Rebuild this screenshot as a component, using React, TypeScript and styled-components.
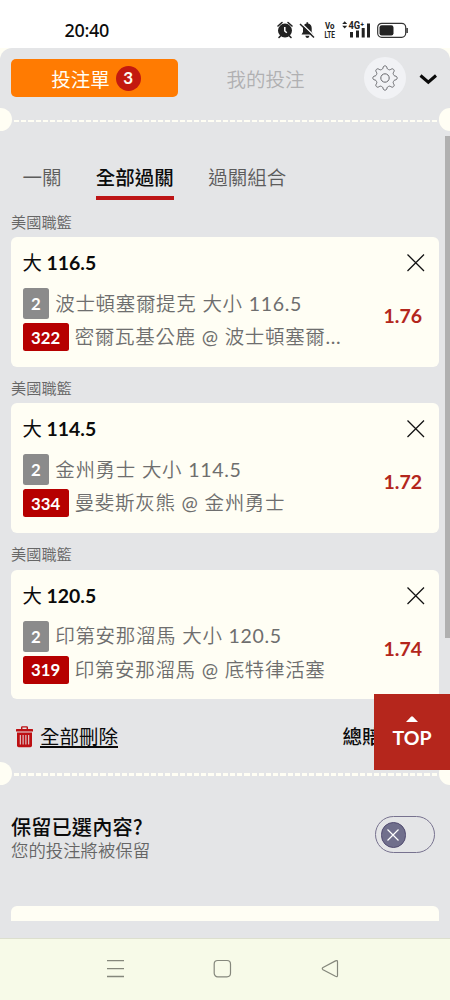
import React from 'react';
import styled, { createGlobalStyle } from 'styled-components';

const cream = '#fffef4';
const sheet = '#e4e5e7';

const GlobalStyle = createGlobalStyle`
  * { box-sizing: border-box; }
  body { margin: 0; background: #fff; }
  button { font: inherit; border: 0; padding: 0; background: none; color: inherit; letter-spacing: inherit; }
`;

const Phone = styled.div`
  position: relative;
  width: 450px;
  height: 1000px;
  overflow: hidden;
  display: flex;
  flex-direction: column;
  font-family: Lato, 'Noto Sans CJK TC', sans-serif;
  font-size: 19.5px;
  color: #0b0b0b;
  white-space: nowrap;
`;

const StatusBar = styled.header`
  height: 48px;
  flex: none;
  display: flex;
  align-items: center;
  justify-content: space-between;
  padding: 12px 40px 0 64.5px;
  font: 500 18px/22px 'Noto Sans', sans-serif;
  letter-spacing: -0.3px;
`;

const StatusIcons = styled.svg`
  display: block;
  width: 134px;
  height: 22px;
`;

const Backdrop = styled.div`
  flex: none;
  height: 890px;
  background: ${cream};
`;

const Sheet = styled.main`
  height: 890px;
  background: ${sheet};
  border-radius: 12px 12px 0 0;
  display: flex;
  flex-direction: column;
`;

const TopBar = styled.div`
  height: 60px;
  flex: none;
  display: flex;
  align-items: center;
  padding: 0 12px 0 11px;
`;

const SlipButton = styled.button`
  width: 167px;
  height: 38px;
  border-radius: 5px;
  background: #ff7b02;
  color: ${cream};
  display: flex;
  align-items: center;
  justify-content: center;
  gap: 6px;
  padding-left: 3px;
`;

const Count = styled.span`
  width: 25px;
  height: 25px;
  border-radius: 50%;
  background: #c3190f;
  font-weight: 700;
  font-size: 17px;
  line-height: 24px;
  text-align: center;
`;

const MyBets = styled.button`
  width: 175px;
  color: #b0b0b2;
  font-weight: 350;
`;

const GearButton = styled.button`
  margin-left: 11px;
  width: 42px;
  height: 42px;
  border-radius: 50%;
  background: #f1f2f5;
  display: grid;
  place-items: center;
`;

const Chevron = styled.svg`
  margin-left: auto;
`;

const Perforation = styled.div`
  height: 23px;
  flex: none;
  display: flex;
  align-items: center;
  justify-content: space-between;
  &::before, &::after {
    content: '';
    width: 11.5px;
    height: 23px;
    background: ${cream};
  }
  &::before { border-radius: 0 12px 12px 0; }
  &::after { border-radius: 12px 0 0 12px; }
`;

const Dashes = styled.div`
  flex: 1;
  height: 2.6px;
  margin-top: 2.6px;
  background: repeating-linear-gradient(90deg, transparent 0 2px, ${cream} 2px 7.2px);
`;

const Tabs = styled.nav`
  height: 78.5px;
  flex: none;
  padding: 31px 0 0 22.5px;
  display: flex;
  gap: 34.3px;
  align-items: flex-start;
`;

const Tab = styled.button<{ $active?: boolean }>`
  height: 38px;
  padding-bottom: 2px;
  line-height: 30px;
  font-weight: ${(p) => (p.$active ? 500 : 350)};
  color: ${(p) => (p.$active ? '#0b0b0b' : '#5c5c5c')};
  border-bottom: 4px solid ${(p) => (p.$active ? '#bd1516' : 'transparent')};
`;

const Bet = styled.section`
  height: 166.3px;
  flex: none;
  padding: 0 11px;
`;

const League = styled.h2`
  margin: 0;
  height: 27.5px;
  line-height: 24px;
  font-size: 15.2px;
  font-weight: 350;
  color: #666;
`;

const Card = styled.article`
  height: 129.5px;
  border-radius: 6px;
  background: ${cream};
  padding: 10px 12px 0 11.5px;
`;

const CardTop = styled.div`
  display: flex;
  justify-content: space-between;
  align-items: center;
  height: 32px;
`;

const Pick = styled.h3`
  margin: 0;
  font-size: 19.4px;
  font-weight: 700;
  line-height: 32px;
`;

const PickSide = styled.span`
  font-weight: 400;
`;

const CardBody = styled.div`
  display: flex;
  align-items: center;
  justify-content: space-between;
  padding: 9px 5px 0 0;
`;

const Lines = styled.div`
  display: flex;
  flex-direction: column;
  gap: 4px;
`;

const Line = styled.div<{ $height: number }>`
  height: ${(p) => p.$height}px;
  display: flex;
  align-items: center;
  gap: 6px;
  letter-spacing: 0.67px;
  color: #6e6e6e;
  font-weight: 350;
`;

const LineText = styled.span`
  line-height: 28px;
`;

const Digits = styled.span`
  font-weight: 400;
`;

const Tag = styled.span<{ $red?: boolean }>`
  height: 100%;
  min-width: 26.5px;
  padding: 0 8.5px;
  border-radius: 2.5px;
  background: ${(p) => (p.$red ? '#b60000' : '#8b8b8b')};
  color: #fff;
  font-size: 16.8px;
  font-weight: 700;
  letter-spacing: 0;
  display: grid;
  place-items: center;
`;

const Odds = styled.strong`
  font-weight: 700;
  line-height: 24px;
  margin-top: -7px;
  color: #b3261c;
`;

const Summary = styled.div`
  height: 53.6px;
  flex: none;
  padding: 13px 68.5px 0 16px;
  display: flex;
  align-items: flex-start;
  justify-content: space-between;
  line-height: 32px;
`;

const TotalOdds = styled.span`
  font-weight: 500;
`;

const ClearAll = styled.button`
  display: flex;
  align-items: center;
  gap: 7px;
`;

const ClearLabel = styled.span`
  text-decoration: underline;
  text-decoration-thickness: 1.5px;
  text-underline-offset: 2px;
`;

const KeepRow = styled.div`
  height: 121.3px;
  flex: none;
  display: flex;
  justify-content: space-between;
  align-items: flex-start;
  padding: 31.5px 15.5px 0 11px;
`;

const KeepTitle = styled.div`
  font-family: 'Noto Sans CJK TC', sans-serif;
  font-size: 20.2px;
  letter-spacing: 0.1px;
  font-weight: 500;
  line-height: 24px;
  margin-top: -1px;
`;

const KeepNote = styled.div`
  font-size: 17.4px;
  line-height: 24px;
  font-weight: 350;
  color: #666;
`;

const Toggle = styled.button`
  width: 59.5px;
  height: 37px;
  border: 1.3px solid #77728f;
  border-radius: 19px;
  padding-left: 4.5px;
  display: flex;
  align-items: center;
`;

const Knob = styled.span`
  width: 25.5px;
  height: 25.5px;
  border-radius: 50%;
  background: #706f8c;
  border: 1.3px solid #514b70;
  display: grid;
  place-items: center;
`;

const NextPanel = styled.div`
  height: 15px;
  flex: none;
  margin: 0 11px;
  border-radius: 6px 6px 0 0;
  background: ${cream};
`;

const NavBar = styled.footer`
  height: 62px;
  flex: none;
  background: #f7fae8;
  border-top: 1px solid #dcdfce;
  display: flex;
  justify-content: center;
  gap: 88.5px;
  padding: 20px 5px 0 0;
`;

const TopButton = styled.button`
  position: absolute;
  left: 374px;
  top: 694px;
  width: 76px;
  height: 76px;
  background: #b5261c;
  color: #fff;
  font-weight: 700;
  font-size: 19.5px;
  line-height: 24px;
  display: flex;
  flex-direction: column;
  align-items: center;
  padding-top: 21.5px;
  gap: 4.5px;
`;

const ScrollThumb = styled.div`
  position: absolute;
  left: 445px;
  top: 136px;
  width: 5px;
  height: 502px;
  background: #b0b0b0;
`;

const gearPath = (() => {
  const points: string[] = [];
  const count = 160;
  for (let i = 0; i < count; i++) {
    const a = (i / count) * Math.PI * 2;
    const wave = Math.tanh(1.6 * (Math.cos(8 * a) - 0.15)) / Math.tanh(1.6);
    const r = 10.7 + 1.5 * wave;
    points.push(`${(13 + r * Math.sin(a)).toFixed(2)} ${(13 - r * Math.cos(a)).toFixed(2)}`);
  }
  return `M${points.join('L')}Z`;
})();

const Gear = () => (
  <svg width="26" height="26" viewBox="0 0 26 26" fill="none" stroke="#66676b" strokeWidth="1">
    <path d={gearPath} strokeLinejoin="round" />
    <circle cx="13" cy="13" r="4.2" />
  </svg>
);

const Trash = () => (
  <svg width="17" height="22" viewBox="0 0 17 22" fill="#bd1013">
    <path d="M5 3V1.500Q5 .3 6.200 .3h4.600Q12 .3 12 1.500V3h4.400q.6 0 .6.6v1.900H0V3.600Q0 3 .6 3Zm1.400 0h4.200V1.600H6.400Z" fillRule="evenodd" />
    <path d="M1 6.500h15V19.500q0 1.700-1.700 1.700H2.700Q1 21.200 1 19.500Z" />
    <path d="M4.300 9v9.500M7.100 9v9.500M9.900 9v9.500M12.700 9v9.500" stroke={sheet} strokeWidth="1" />
  </svg>
);

const Close = () => (
  <svg width="22" height="22" viewBox="0 0 22 22" stroke="#111" strokeWidth="1.25">
    <path d="M2.500 2.500 19 19M19 2.500 2.500 19" />
  </svg>
);

const DeviceIcons = () => (
  <StatusIcons viewBox="0 0 134 22" fill="#222">
    <g>
      <circle cx="9" cy="11.600" r="7" />
      <path d="M2 7 6 3.500M12 3.500 16 7M4.500 17 3 18.500M13.500 17 15 18.500" stroke="#222" strokeWidth="1.600" strokeLinecap="round" />
      <path d="M8.800 8v4l2 1.700" fill="none" stroke="#fff" strokeWidth="1.500" />
    </g>
    <g>
      <path d="M25.500 15.500 27 13V9Q27.300 5.200 30.500 4.600V3.300h1.600v1.300Q35.500 5.200 35.700 9v4l1.800 2.500ZM29.300 16.800h4.200Q33 19 31.400 19t-2.100-2.200Z" />
      <path d="M25.500 4.500 39.500 18" stroke="#fff" strokeWidth="1.500" />
      <path d="M24 5 38 18.500" stroke="#222" strokeWidth="1.500" />
    </g>
    <g fontFamily="Roboto, sans-serif" fontWeight="700">
      <text x="49" y="10" fontSize="8.600" textLength="9.500" lengthAdjust="spacingAndGlyphs" letterSpacing="0">Vo</text>
      <text x="48.500" y="18.500" fontSize="9.200" textLength="10.500" lengthAdjust="spacingAndGlyphs" letterSpacing="0">LTE</text>
      <text x="72.500" y="10" fontSize="10" textLength="15.500" lengthAdjust="spacingAndGlyphs" letterSpacing="0">4G⁺</text>
    </g>
    <path d="M66.200 5 68.700 2.300 71.200 5ZM66.200 6.800h5L68.700 9.500Z" />
    <path d="M74 13h3v5.500h-3ZM80 11.500h3v7h-3ZM85.700 9h3v9.500h-3ZM91 4.500h3v14h-3Z" />
    <rect x="101.700" y="4.300" width="28" height="14" rx="4" fill="none" stroke="#333" strokeWidth="1.200" />
    <rect x="103.500" y="6.200" width="14" height="10.200" rx="2.200" />
    <path d="M130.400 9h1.400v5h-1.400Z" />
  </StatusIcons>
);

const bets = [
  { total: '116.5', team: '波士頓塞爾提克', id: '322', away: '密爾瓦基公鹿', home: '波士頓塞爾', cut: true, odds: '1.76' },
  { total: '114.5', team: '金州勇士', id: '334', away: '曼斐斯灰熊', home: '金州勇士', odds: '1.72' },
  { total: '120.5', team: '印第安那溜馬', id: '319', away: '印第安那溜馬', home: '底特律活塞', odds: '1.74' },
];

export default function App() {
  return (
    <Phone>
      <GlobalStyle />
      <StatusBar>
        <span>20:40</span>
        <DeviceIcons />
      </StatusBar>
      <Backdrop>
        <Sheet>
          <TopBar>
            <SlipButton>投注單<Count>3</Count></SlipButton>
            <MyBets>我的投注</MyBets>
            <GearButton><Gear /></GearButton>
            <Chevron width="20" height="14" viewBox="0 0 20 14" fill="none" stroke="#0a0a0a" strokeWidth="3">
              <path d="M2.500 4.500 10.300 11.200 18 4.500" />
            </Chevron>
          </TopBar>
          <Perforation><Dashes /></Perforation>
          <Tabs>
            <Tab>一關</Tab>
            <Tab $active>全部過關</Tab>
            <Tab>過關組合</Tab>
          </Tabs>
          {bets.map((bet) => (
            <Bet key={bet.id}>
              <League>美國職籃</League>
              <Card>
                <CardTop>
                  <Pick><PickSide>大</PickSide> {bet.total}</Pick>
                  <Close />
                </CardTop>
                <CardBody>
                  <Lines>
                    <Line $height={31}>
                      <Tag>2</Tag>
                      <LineText>{bet.team} 大小 <Digits>{bet.total}</Digits></LineText>
                    </Line>
                    <Line $height={28}>
                      <Tag $red>{bet.id}</Tag>
                      <LineText>{bet.away} <Digits>@</Digits> {bet.home}{bet.cut && <Digits>...</Digits>}</LineText>
                    </Line>
                  </Lines>
                  <Odds>{bet.odds}</Odds>
                </CardBody>
              </Card>
            </Bet>
          ))}
          <Summary>
            <ClearAll><Trash /><ClearLabel>全部刪除</ClearLabel></ClearAll>
            <TotalOdds>總賠</TotalOdds>
          </Summary>
          <Perforation><Dashes /></Perforation>
          <KeepRow>
            <div>
              <KeepTitle>保留已選內容?</KeepTitle>
              <KeepNote>您的投注將被保留</KeepNote>
            </div>
            <Toggle>
              <Knob>
                <svg width="14" height="14" viewBox="0 0 14 14" stroke="#fff" strokeWidth="1.200">
                  <path d="M1.500 1.500 12.500 12.500M12.500 1.500 1.500 12.500" />
                </svg>
              </Knob>
            </Toggle>
          </KeepRow>
          <NextPanel />
        </Sheet>
      </Backdrop>
      <NavBar>
        <svg width="19" height="20" viewBox="0 0 19 20" stroke="#85877c" strokeWidth="1.300">
          <path d="M1 1.700h17M1 9.600h17M1 17.500h17" />
        </svg>
        <svg width="19" height="20" viewBox="0 0 19 20" fill="none" stroke="#85877c" strokeWidth="1.200">
          <rect x="1.200" y="1.500" width="16.300" height="16.300" rx="3.500" />
        </svg>
        <svg width="19" height="20" viewBox="0 0 19 20" fill="none" stroke="#85877c" strokeWidth="1.200">
          <path d="M2 8.500 14.500 1.900q2-1 2 .8v13.800q0 1.800-2 .8L2 10.700q-1.500-1.100 0-2.200Z" />
        </svg>
      </NavBar>
      <ScrollThumb />
      <TopButton>
        <svg width="12" height="6" viewBox="0 0 12 6" fill="#fff"><path d="M0 6 5 .7q1-1 2 0L12 6Z" /></svg>
        TOP
      </TopButton>
    </Phone>
  );
}
